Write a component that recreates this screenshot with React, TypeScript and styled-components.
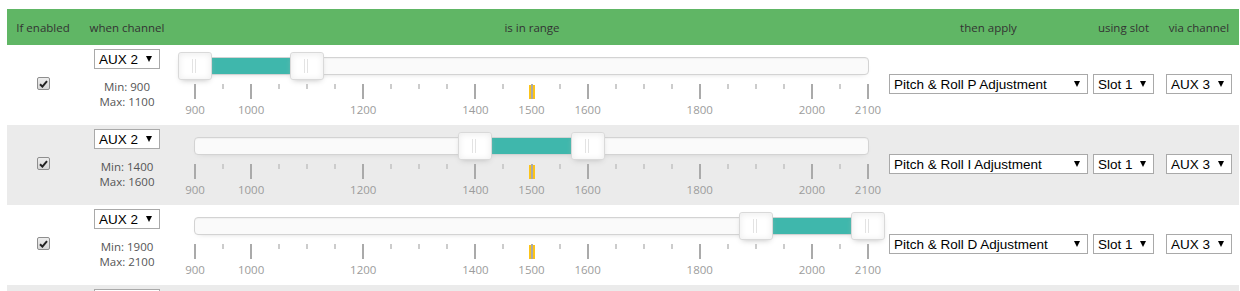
import styled, { createGlobalStyle } from "styled-components";

const GlobalStyle = createGlobalStyle`
  html, body {
    margin: 0;
    padding: 0;
    overflow: hidden;
    background: #fff;
    font-family: "Open Sans", "Liberation Sans", sans-serif;
  }
`;

const MIN = 900;
const MAX = 2100;
const CURRENT = 1500;
const LABELS = [900, 1000, 1200, 1400, 1500, 1600, 1800, 2000, 2100];
const STEPS = Array.from({ length: 25 }, (_, i) => MIN + i * 50);

const pct = (v: number) => ((v - MIN) / (MAX - MIN)) * 100;

const COLUMNS = "72px 96px 714px 199px 71px 80px";

const Page = styled.div`
  padding: 9px 1px 0 7px;
`;

const Header = styled.div`
  display: grid;
  grid-template-columns: ${COLUMNS};
  height: 36px;
  align-items: center;
  background: #60b665;
  color: #333;
  font-size: 11.5px;
  justify-items: center;
`;

const Row = styled.div<{ $odd: boolean }>`
  display: grid;
  grid-template-columns: ${COLUMNS};
  height: 80px;
  background: ${(p) => (p.$odd ? "#ebebeb" : "#fff")};
`;

const CheckCell = styled.div`
  display: flex;
  align-items: center;
  justify-content: center;
  padding-bottom: 3px;
`;

const CheckBox = styled.span`
  display: flex;
  align-items: center;
  justify-content: center;
  width: 13px;
  height: 13px;
  box-sizing: border-box;
  border: 1px solid #8e8e8e;
  border-radius: 2px;
  background: linear-gradient(#ededed, #d6d6d6);
`;

const ChannelCell = styled.div`
  display: flex;
  flex-direction: column;
  align-items: center;
  padding-top: 4px;
`;

const RangeText = styled.div`
  margin-top: 10px;
  font-size: 11.5px;
  line-height: 15px;
  color: #555;
  text-align: center;
`;

const SelectCell = styled.div`
  display: flex;
  align-items: center;
  justify-content: center;
  padding-bottom: 2px;
`;

const Select = styled.div<{ $w: number }>`
  display: flex;
  align-items: center;
  width: ${(p) => p.$w}px;
  height: 20px;
  box-sizing: border-box;
  border: 1px solid #a9a9a9;
  background: #fff;
  padding: 0 7px 0 4px;
  font-family: "Liberation Sans", Arial, sans-serif;
  font-size: 13.5px;
  color: #000;
  white-space: nowrap;
`;

const Arrow = styled.span`
  margin-left: auto;
  width: 0;
  height: 0;
  border-left: 3px solid transparent;
  border-right: 3px solid transparent;
  border-top: 6px solid #000;
`;

const SliderCell = styled.div`
  padding: 12px 20px 0 19px;
`;

const Track = styled.div`
  position: relative;
  height: 18px;
  box-sizing: border-box;
  border: 1px solid #d3d3d3;
  border-radius: 4px;
  background: #fafafa;
  box-shadow: inset 0 1px 1px #f0f0f0, 0 3px 6px -5px #bbb;
`;

const Connect = styled.div`
  position: absolute;
  top: 0;
  bottom: 0;
  background: #3fb7ac;
`;

const Handle = styled.div`
  position: absolute;
  top: -6px;
  width: 34px;
  height: 28px;
  box-sizing: border-box;
  border: 1px solid #d9d9d9;
  border-radius: 3px;
  background: #fff;
  box-shadow: inset 0 0 1px #fff, inset 0 1px 7px #ebebeb, 0 3px 6px -3px #bbb;
  z-index: 1;

  &::before,
  &::after {
    content: "";
    position: absolute;
    top: 6px;
    width: 1px;
    height: 14px;
    background: #e3e3e3;
  }
  &::before {
    left: 13px;
  }
  &::after {
    left: 16px;
  }
`;

const Scale = styled.div`
  position: relative;
  height: 36px;
  margin: 9px 1px 0;
`;

const Tick = styled.div<{ $large: boolean }>`
  position: absolute;
  top: 0;
  width: 2px;
  height: ${(p) => (p.$large ? 15 : 5)}px;
  background: ${(p) => (p.$large ? "#aaa" : "#ccc")};
  transform: translateX(-50%);
`;

const Marker = styled.div`
  position: absolute;
  top: 1px;
  width: 6px;
  height: 14px;
  background: #fcc419;
  transform: translateX(-50%);
`;

const Label = styled.div`
  position: absolute;
  top: 19px;
  font-size: 11.5px;
  line-height: 14px;
  color: #9c9c9c;
  transform: translateX(-50%);
`;

type Rule = { low: number; high: number; fn: string };

const RULES: Rule[] = [
  { low: 900, high: 1100, fn: "Pitch & Roll P Adjustment" },
  { low: 1400, high: 1600, fn: "Pitch & Roll I Adjustment" },
  { low: 1900, high: 2100, fn: "Pitch & Roll D Adjustment" },
  { low: 900, high: 1100, fn: "Yaw P Adjustment" },
];

const Check = () => (
  <CheckBox>
    <svg width="9" height="8" viewBox="0 0 9 8">
      <path d="M1 4.2 L3.4 6.6 L8 1.2" fill="none" stroke="#222" strokeWidth="2" />
    </svg>
  </CheckBox>
);

const RangeSlider = ({ low, high }: { low: number; high: number }) => (
  <SliderCell>
    <Track>
      <Connect style={{ left: `${pct(low)}%`, right: `${100 - pct(high)}%` }} />
      <Handle style={{ left: `calc(${pct(low)}% - 17px)` }} />
      <Handle style={{ left: `calc(${pct(high)}% - 17px)` }} />
    </Track>
    <Scale>
      <Marker style={{ left: `${pct(CURRENT)}%` }} />
      {STEPS.map((v) => (
        <Tick key={v} $large={LABELS.includes(v)} style={{ left: `${pct(v)}%` }} />
      ))}
      {LABELS.map((v) => (
        <Label key={v} style={{ left: `${pct(v)}%` }}>
          {v}
        </Label>
      ))}
    </Scale>
  </SliderCell>
);

const App = () => (
  <Page>
    <GlobalStyle />
    <Header>
      <span>If enabled</span>
      <span>when channel</span>
      <span>is in range</span>
      <span>then apply</span>
      <span>using slot</span>
      <span>via channel</span>
    </Header>
    {RULES.map((r, i) => (
      <Row key={i} $odd={i % 2 === 1}>
        <CheckCell>
          <Check />
        </CheckCell>
        <ChannelCell>
          <Select $w={66}>
            AUX 2<Arrow />
          </Select>
          <RangeText>
            Min: {r.low}
            <br />
            Max: {r.high}
          </RangeText>
        </ChannelCell>
        <RangeSlider low={r.low} high={r.high} />
        <SelectCell>
          <Select $w={199}>
            {r.fn}
            <Arrow />
          </Select>
        </SelectCell>
        <SelectCell>
          <Select $w={61}>
            Slot 1<Arrow />
          </Select>
        </SelectCell>
        <SelectCell>
          <Select $w={66}>
            AUX 3<Arrow />
          </Select>
        </SelectCell>
      </Row>
    ))}
  </Page>
);

export default App;
